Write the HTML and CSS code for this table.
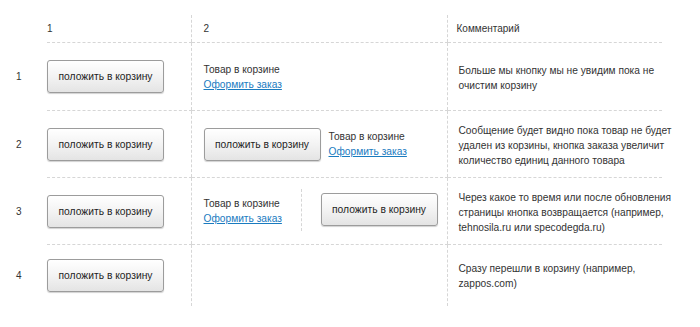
FILE: index.html
```html
<!DOCTYPE html>
<html lang="ru">
<head>
<meta charset="utf-8">
<title>Кнопка корзины</title>
<link rel="stylesheet" href="styles.css">
</head>
<body>
<table class="grid">
  <colgroup>
    <col class="c-num">
    <col class="c-one">
    <col class="c-two">
    <col class="c-three">
  </colgroup>
  <tr class="head">
    <td class="num"></td>
    <td class="one">1</td>
    <td class="two">2</td>
    <td class="three">Комментарий</td>
  </tr>
  <tr class="row r1">
    <td class="num">1</td>
    <td class="one"><button class="btn">положить в корзину</button></td>
    <td class="two">
      <div class="status">
        <span>Товар в корзине</span>
        <a href="#" class="link">Оформить заказ</a>
      </div>
    </td>
    <td class="three"><p class="note">Больше мы кнопку мы не увидим пока не<br>очистим корзину</p></td>
  </tr>
  <tr class="row r2">
    <td class="num">2</td>
    <td class="one"><button class="btn">положить в корзину</button></td>
    <td class="two">
      <div class="pair">
        <button class="btn">положить в корзину</button>
        <div class="status">
          <span>Товар в корзине</span>
          <a href="#" class="link">Оформить заказ</a>
        </div>
      </div>
    </td>
    <td class="three"><p class="note">Сообщение будет видно пока товар не будет<br>удален из корзины, кнопка заказа увеличит<br>количество единиц данного товара</p></td>
  </tr>
  <tr class="row r3">
    <td class="num">3</td>
    <td class="one"><button class="btn">положить в корзину</button></td>
    <td class="two">
      <div class="split">
        <div class="status fixed">
          <span>Товар в корзине</span>
          <a href="#" class="link">Оформить заказ</a>
        </div>
        <div class="side">
          <button class="btn">положить в корзину</button>
        </div>
      </div>
    </td>
    <td class="three"><p class="note">Через какое то время или после обновления<br>страницы кнопка возвращается (например,<br>tehnosila.ru или specodegda.ru)</p></td>
  </tr>
  <tr class="row r4">
    <td class="num">4</td>
    <td class="one"><button class="btn">положить в корзину</button></td>
    <td class="two"></td>
    <td class="three"><p class="note">Сразу перешли в корзину (например,<br>zappos.com)</p></td>
  </tr>
</table>
</body>
</html>
```

FILE: styles.css
```css
html, body {
  margin: 0;
  padding: 0;
  background: #fff;
}

body {
  font-family: "Liberation Sans", Arial, sans-serif;
  font-size: 10px;
  color: #333;
}

.grid {
  border-collapse: collapse;
  table-layout: fixed;
  width: 662px;
  margin-top: 15px;
}

.c-num { width: 47px; }
.c-one { width: 144px; }
.c-two { width: 256px; }
.c-three { width: 215px; }

.grid td {
  padding: 0;
  vertical-align: middle;
  line-height: 15px;
}

.head td { height: 27px; }
.r1 td { height: 67px; }
.r2 td { height: 66px; }
.r3 td { height: 66px; }
.r4 td { height: 61px; }

.grid .num {
  padding-left: 16px;
}

.grid .two {
  padding-left: 12px;
  border-left: 1px dashed #d6d6d6;
}

.grid .three {
  padding-left: 9px;
  border-left: 1px dashed #d6d6d6;
  white-space: nowrap;
}

.head .one, .head .two, .head .three,
.r1 .one, .r1 .two, .r1 .three,
.r2 .one, .r2 .two, .r2 .three,
.r3 .one, .r3 .two, .r3 .three {
  border-bottom: 1px dashed #d6d6d6;
}

.note {
  margin: 0;
  padding: 3px 0 0 2px;
  font-size: 10.2px;
}

.r4 .note {
  padding-top: 0;
}

.btn {
  width: 117px;
  height: 33px;
  padding: 0;
  font-family: "Liberation Sans", Arial, sans-serif;
  font-size: 10.3px;
  color: #1e1e1e;
  background: linear-gradient(#ffffff, #f3f3f3 50%, #e4e4e4);
  border: 1px solid #9c9c9c;
  border-radius: 3px;
  box-shadow: 0 1px 1px rgba(0, 0, 0, 0.18);
  cursor: pointer;
}

.status {
  display: flex;
  flex-direction: column;
  font-size: 10.2px;
}

.link {
  color: #1a7bbf;
  text-decoration: underline;
}

.pair {
  display: flex;
  align-items: center;
  gap: 8px;
}

.split {
  display: flex;
  align-items: center;
}

.fixed {
  width: 97px;
}

.side {
  border-left: 1px dashed #d6d6d6;
  padding: 4px 0 5px 19px;
  margin-top: -3px;
}
```
